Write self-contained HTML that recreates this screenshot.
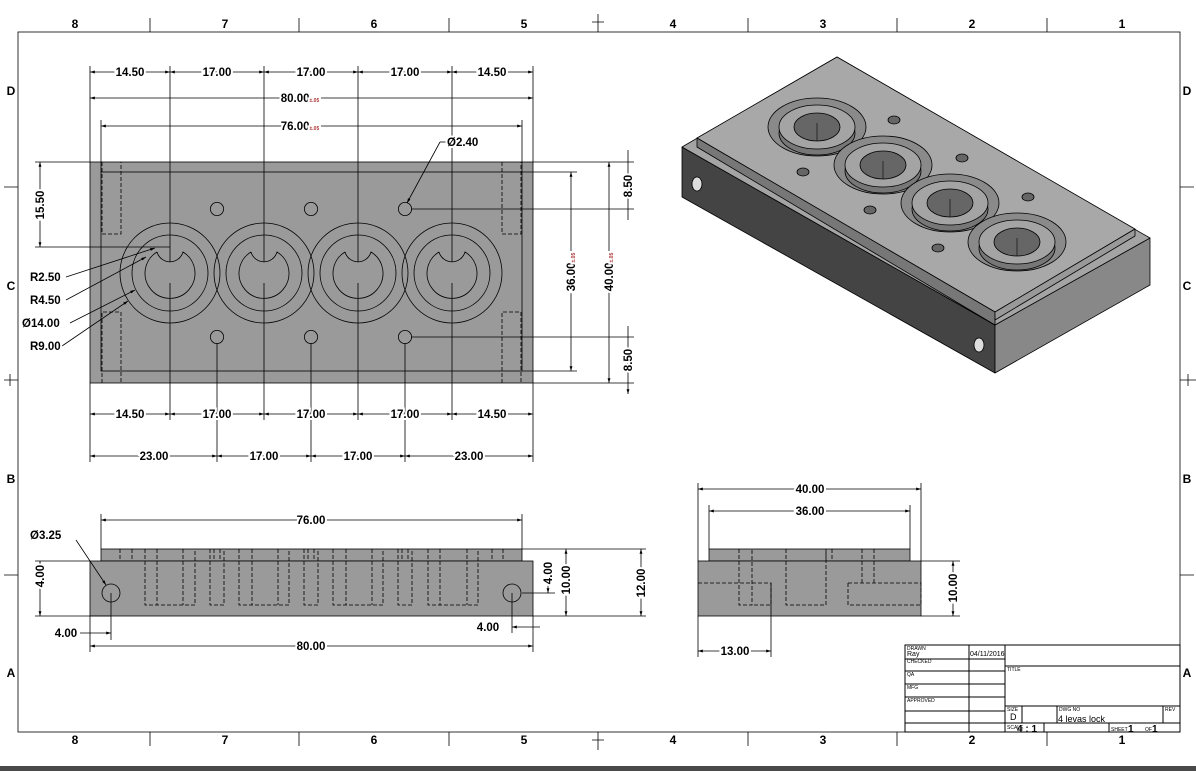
<!DOCTYPE html>
<html><head><meta charset="utf-8"><style>
html,body{margin:0;padding:0;background:#fff;}
svg{display:block;}
text{font-family:"Liberation Sans",sans-serif;}
.d{font-size:11.5px;font-weight:bold;fill:#000;stroke:#fff;stroke-width:4px;paint-order:stroke;}
.z{font-size:12px;font-weight:bold;fill:#000;}
.l{stroke:#000;stroke-width:0.8;fill:none;}
.g{stroke:#000;stroke-width:0.8;fill:#9a9a9a;}
.h{stroke:#000;stroke-width:0.8;fill:none;stroke-dasharray:4 2;}
.t{font-size:5px;fill:#000;}
</style></head><body>
<svg width="1196" height="771" viewBox="0 0 1196 771" xmlns="http://www.w3.org/2000/svg">
<defs>
<marker id="a" viewBox="0 0 10 10" refX="10" refY="5" markerWidth="6" markerHeight="6" orient="auto-start-reverse"><path d="M0,2 L10,5 L0,8z" fill="#000"/></marker>
</defs>
<rect width="1196" height="771" fill="#fff"/>
<!-- frame -->
<rect x="18" y="32" width="1162" height="700" class="l" stroke-width="1"/>
<g class="z" text-anchor="middle">
<text x="75" y="28">8</text><text x="225" y="28">7</text><text x="374" y="28">6</text><text x="524" y="28">5</text><text x="673" y="28">4</text><text x="823" y="28">3</text><text x="972" y="28">2</text><text x="1122" y="28">1</text>
<text x="75" y="744">8</text><text x="225" y="744">7</text><text x="374" y="744">6</text><text x="524" y="744">5</text><text x="673" y="744">4</text><text x="823" y="744">3</text><text x="972" y="744">2</text><text x="1122" y="744">1</text>
<text x="11" y="95">D</text><text x="11" y="290">C</text><text x="11" y="483">B</text><text x="11" y="677">A</text>
<text x="1187" y="95">D</text><text x="1187" y="290">C</text><text x="1187" y="483">B</text><text x="1187" y="677">A</text>
</g>
<g class="l">
<path d="M150,18V32M299,18V32M449,18V32M748,18V32M897,18V32M1047,18V32"/>
<path d="M150,732V746M299,732V746M449,732V746M748,732V746M897,732V746M1047,732V746"/>
<path d="M4,187H18M4,575H18M1180,187H1194M1180,575H1194"/>
<path d="M598,14V32M592,22H604M598,732V750M592,740H604M4,380H18M10,374V386M1180,380H1196M1188,374V386"/>
</g>
<rect x="0" y="766" width="1196" height="5" fill="#4a4a4a"/>

<!-- TOP VIEW -->
<rect x="90" y="162" width="443" height="221" class="g"/>
<rect x="101" y="172" width="421" height="199" class="l"/>
<g class="h"><path d="M102,162V234H121V162M102,383V312H121V383M502,162V234H521V162M502,383V312H521V383"/></g>
<g class="l">
<circle cx="170" cy="273" r="50"/><circle cx="170" cy="273" r="38"/>
<circle cx="264" cy="273" r="50"/><circle cx="264" cy="273" r="38"/>
<circle cx="358" cy="273" r="50"/><circle cx="358" cy="273" r="38"/>
<circle cx="452" cy="273" r="50"/><circle cx="452" cy="273" r="38"/>
<path d="M157,252A13.5,13.5 0 0 0 183,252A25,25 0 1 1 157,252"/>
<path d="M251,252A13.5,13.5 0 0 0 277,252A25,25 0 1 1 251,252"/>
<path d="M345,252A13.5,13.5 0 0 0 371,252A25,25 0 1 1 345,252"/>
<path d="M439,252A13.5,13.5 0 0 0 465,252A25,25 0 1 1 439,252"/>
<circle cx="217" cy="209" r="6.6"/><circle cx="311" cy="209" r="6.6"/><circle cx="405" cy="209" r="6.6"/>
<circle cx="217" cy="337" r="6.6"/><circle cx="311" cy="337" r="6.6"/><circle cx="405" cy="337" r="6.6"/>
<path d="M90,66V162M533,66V162M170,66V262M264,66V262M358,66V262M452,66V262M101,120V172M522,120V172"/>
<path d="M90,383V462M533,383V462M170,283V420M264,283V420M358,283V420M452,283V420M217,343V462M311,343V462M405,343V462"/>
<path d="M35,162H90M35,247H170M522,172H577M533,162H634M533,383H634M411,209H634M522,371H577M411,337H634"/>
</g>
<g class="l" marker-start="url(#a)" marker-end="url(#a)">
<path d="M90,72H170"/><path d="M170,72H264"/><path d="M264,72H358"/><path d="M358,72H452"/><path d="M452,72H533"/>
<path d="M90,98H533"/><path d="M101,126H522"/>
<path d="M90,414H170"/><path d="M170,414H264"/><path d="M264,414H358"/><path d="M358,414H452"/><path d="M452,414H533"/>
<path d="M90,456H217"/><path d="M217,456H311"/><path d="M311,456H405"/><path d="M405,456H533"/>
<path d="M40,162V247"/><path d="M571,172V371"/><path d="M609,162V383"/>
</g>
<g class="l">
<path d="M628,150V162M628,209V220M628,326V337M628,383V394" marker-end="url(#a)"/>
<path d="M628,162V209M628,337V383"/>
<path d="M440,142L407,203" marker-end="url(#a)"/><path d="M440,142H447"/>
<path d="M66,277L155,248" marker-end="url(#a)"/>
<path d="M66,300L146,257" marker-end="url(#a)"/>
<path d="M70,323L135,290" marker-end="url(#a)"/>
<path d="M62,346L128,301" marker-end="url(#a)"/>
</g>
<g class="d" text-anchor="middle">
<text x="130" y="76">14.50</text><text x="217" y="76">17.00</text><text x="311" y="76">17.00</text><text x="405" y="76">17.00</text><text x="492" y="76">14.50</text>
<text x="300" y="102">80.00<tspan font-size="5" fill="#a33">±.05</tspan></text>
<text x="300" y="130">76.00<tspan font-size="5" fill="#a33">±.05</tspan></text>
<text x="130" y="418">14.50</text><text x="217" y="418">17.00</text><text x="311" y="418">17.00</text><text x="405" y="418">17.00</text><text x="492" y="418">14.50</text>
<text x="154" y="460">23.00</text><text x="264" y="460">17.00</text><text x="358" y="460">17.00</text><text x="469" y="460">23.00</text>
<text transform="translate(44,205) rotate(-90)">15.50</text>
<text transform="translate(575,272) rotate(-90)">36.00<tspan font-size="5" fill="#a33">±.05</tspan></text>
<text transform="translate(613,272) rotate(-90)">40.00<tspan font-size="5" fill="#a33">±.05</tspan></text>
<text transform="translate(632,186) rotate(-90)">8.50</text>
<text transform="translate(632,360) rotate(-90)">8.50</text>
</g>
<g class="d">
<text x="447" y="146">Ø2.40</text>
<text x="30" y="281">R2.50</text><text x="30" y="304">R4.50</text><text x="22" y="327">Ø14.00</text><text x="30" y="350">R9.00</text>
</g>

<!-- FRONT VIEW -->
<rect x="101" y="549" width="421" height="12" class="g"/>
<rect x="90" y="561" width="443" height="55" class="g"/>
<g class="h">
<path d="M145,549V605H195V549M157,549V605M183,549V605M210,549V605H224V549M239,549V605H289V549M252,549V605M278,549V605M304,549V605H318V549M333,549V605H383V549M346,549V605M372,549V605M398,549V605H412V549M428,549V605H478V549M440,549V605M467,549V605"/>
<path d="M120,549V561M132,549V561M492,549V561M503,549V561M214,549V561M220,549V561M402,549V561M408,549V561M308,549V561M314,549V561"/>
</g>
<g class="l">
<circle cx="111" cy="593" r="9"/><circle cx="512" cy="593" r="9"/>
<path d="M101,514V549M522,514V549M90,616V652M533,616V652M111,593V640M512,593V633M35,561H90M35,616H111M522,593H555M533,616H646M522,549H646"/>
<path d="M76,540L106,585" marker-end="url(#a)"/>
</g>
<g class="l" marker-start="url(#a)" marker-end="url(#a)">
<path d="M101,520H522"/><path d="M90,646H533"/><path d="M40,561V616"/>
<path d="M548,561V593"/><path d="M566,549V616"/><path d="M641,549V616"/>
</g>
<g class="l"><path d="M80,633H111" marker-end="url(#a)"/><path d="M540,627H512" marker-end="url(#a)"/></g>
<g class="d" text-anchor="middle">
<text x="311" y="524">76.00</text><text x="311" y="650">80.00</text>
<text x="66" y="637">4.00</text><text x="488" y="631">4.00</text>
<text transform="translate(44,576) rotate(-90)">4.00</text>
<text transform="translate(552,573) rotate(-90)">4.00</text>
<text transform="translate(570,580) rotate(-90)">10.00</text>
<text transform="translate(645,583) rotate(-90)">12.00</text>
</g>
<text class="d" x="30" y="539">Ø3.25</text>

<!-- SIDE VIEW -->
<rect x="709" y="549" width="201" height="12" class="g"/>
<rect x="698" y="561" width="223" height="55" class="g"/>
<g class="h"><path d="M739,549V605H752V549M698,583H771V605H752M786,549V605H826V549M848,583H921V605H848V583M862,549V583M874,549V583M826,549V561M832,549V561"/></g>
<g class="l"><path d="M698,483V561M921,483V561M709,505V549M910,505V549M698,616V657M771,583V657M921,561H960M921,616H960"/></g>
<g class="l" marker-start="url(#a)" marker-end="url(#a)">
<path d="M698,489H921"/><path d="M709,511H910"/><path d="M953,561V616"/><path d="M698,651H771"/>
</g>
<g class="d" text-anchor="middle">
<text x="810" y="493">40.00</text><text x="810" y="515">36.00</text><text x="735" y="655">13.00</text>
<text transform="translate(957,588) rotate(-90)">10.00</text>
</g>

<!-- ISO VIEW -->
<g stroke="#000" stroke-width="0.8" stroke-linejoin="round">
<polygon points="682,147 995,325 995,373 682,197" fill="#444"/>
<polygon points="995,325 1150,238 1150,285 995,373" fill="#888"/>
<polygon points="682,147 837,57 1150,238 995,325" fill="#a4a4a4"/>
<polygon points="697,138 837,57 1135,229 995,312" fill="#a8a8a8"/>
<polygon points="697,138 995,312 995,325 697,147" fill="#777"/>
<polygon points="995,312 1135,229 1135,236 995,320" fill="#999"/>
</g>
<g stroke="#000" stroke-width="0.8">
<g transform="translate(817,127)"><ellipse rx="49" ry="29" fill="#8a8a8a"/><ellipse cy="6" rx="38" ry="22" fill="#777"/><ellipse cy="0" rx="38" ry="22" fill="#a4a4a4"/><ellipse cy="0" rx="23" ry="14" fill="#666"/><path d="M0,-4V14" stroke-width="0.6"/></g>
<g transform="translate(883,165)"><ellipse rx="49" ry="29" fill="#8a8a8a"/><ellipse cy="6" rx="38" ry="22" fill="#777"/><ellipse cy="0" rx="38" ry="22" fill="#a4a4a4"/><ellipse cy="0" rx="23" ry="14" fill="#666"/><path d="M0,-4V14" stroke-width="0.6"/></g>
<g transform="translate(950,203)"><ellipse rx="49" ry="29" fill="#8a8a8a"/><ellipse cy="6" rx="38" ry="22" fill="#777"/><ellipse cy="0" rx="38" ry="22" fill="#a4a4a4"/><ellipse cy="0" rx="23" ry="14" fill="#666"/><path d="M0,-4V14" stroke-width="0.6"/></g>
<g transform="translate(1017,242)"><ellipse rx="49" ry="29" fill="#8a8a8a"/><ellipse cy="6" rx="38" ry="22" fill="#777"/><ellipse cy="0" rx="38" ry="22" fill="#a4a4a4"/><ellipse cy="0" rx="23" ry="14" fill="#666"/><path d="M0,-4V14" stroke-width="0.6"/></g>
<ellipse cx="894" cy="120" rx="6" ry="4" fill="#666"/><ellipse cx="962" cy="158" rx="6" ry="4" fill="#666"/><ellipse cx="1028" cy="197" rx="6" ry="4" fill="#666"/>
<ellipse cx="803" cy="172" rx="6" ry="4" fill="#666"/><ellipse cx="870" cy="210" rx="6" ry="4" fill="#666"/><ellipse cx="938" cy="248" rx="6" ry="4" fill="#666"/>
<ellipse cx="697" cy="184" rx="5" ry="7" fill="#ddd"/><ellipse cx="979" cy="345" rx="5" ry="7" fill="#ddd"/>
</g>

<!-- TITLE BLOCK -->
<g stroke="#000" stroke-width="1" fill="none">
<rect x="905" y="645" width="275" height="87"/>
<path d="M905,659H1005M905,671H1005M905,684H1005M905,697H1005M905,711H1005M905,723H1180M969,645V732M1005,645V732M1005,666H1180M1005,706H1180M1022,706V723M1057,706V723M1163,706V723M1044,723V732M1109,723V732"/>
</g>
<g class="t">
<text x="907" y="650">DRAWN</text><text x="907" y="663">CHECKED</text><text x="907" y="676">QA</text><text x="907" y="689">MFG</text><text x="907" y="702">APPROVED</text>
<text x="1007" y="671">TITLE</text><text x="1007" y="711">SIZE</text><text x="1059" y="711">DWG NO</text><text x="1165" y="711">REV</text>
<text x="1007" y="729">SCALE</text><text x="1111" y="731">SHEET</text><text x="1145" y="731">OF</text>
</g>
<text x="907" y="656" font-size="7">Ray</text><text x="970" y="656" font-size="7">04/11/2016</text>
<text x="1010" y="720" font-size="9">D</text><text x="1058" y="722" font-size="9">4 levas lock</text>
<text x="1017" y="732" font-size="10" font-weight="bold">4 : 1</text>
<text x="1128" y="732" font-size="10" font-weight="bold">1</text><text x="1152" y="732" font-size="10" font-weight="bold">1</text>
</svg>
</body></html>
